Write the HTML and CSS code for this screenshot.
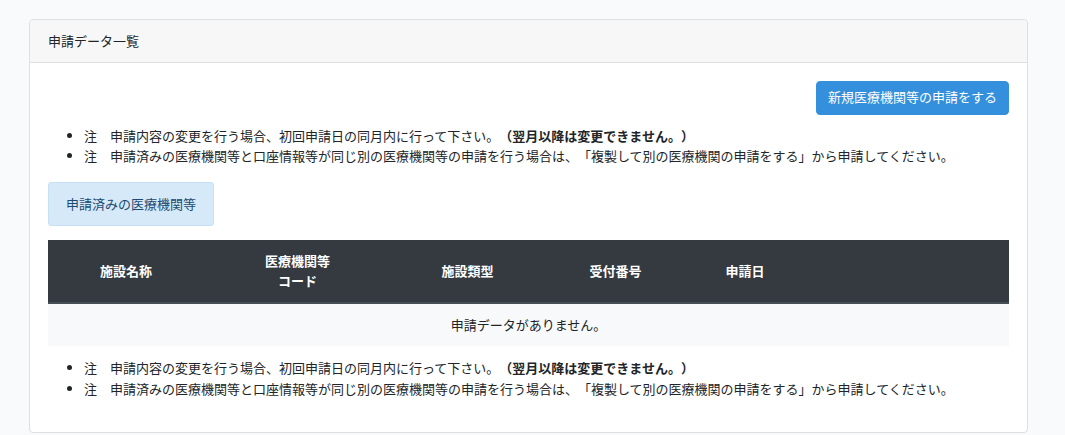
FILE: index.html
```html
<!DOCTYPE html>
<html lang="ja">
<head>
    <meta charset="UTF-8">
    <meta name="viewport" content="width=device-width, initial-scale=1.0">
    <title>申請データ一覧</title>
    <link rel="stylesheet" href="styles.css">
</head>
<body>
    <main class="page">
        <div class="card">
            <div class="card-header">申請データ一覧</div>
            <div class="card-body">
                <div class="actions">
                    <button class="btn-primary" type="button">新規医療機関等の申請をする</button>
                </div>

                <ul class="notes">
                    <li>注　申請内容の変更を行う場合、初回申請日の同月内に行って下さい。<strong>（翌月以降は変更できません。）</strong></li>
                    <li>注　申請済みの医療機関等と口座情報等が同じ別の医療機関等の申請を行う場合は、「複製して別の医療機関の申請をする」から申請してください。</li>
                </ul>

                <div class="section-label">申請済みの医療機関等</div>

                <table class="data-table">
                    <colgroup>
                        <col style="width: 156px">
                        <col style="width: 187px">
                        <col style="width: 153px">
                        <col style="width: 143px">
                        <col style="width: 116px">
                        <col>
                    </colgroup>
                    <thead>
                        <tr>
                            <th>施設名称</th>
                            <th>医療機関等<br>コード</th>
                            <th>施設類型</th>
                            <th>受付番号</th>
                            <th>申請日</th>
                            <th></th>
                        </tr>
                    </thead>
                    <tbody>
                        <tr>
                            <td colspan="6" class="empty">申請データがありません。</td>
                        </tr>
                    </tbody>
                </table>

                <ul class="notes">
                    <li>注　申請内容の変更を行う場合、初回申請日の同月内に行って下さい。<strong>（翌月以降は変更できません。）</strong></li>
                    <li>注　申請済みの医療機関等と口座情報等が同じ別の医療機関等の申請を行う場合は、「複製して別の医療機関の申請をする」から申請してください。</li>
                </ul>
            </div>
        </div>
    </main>
</body>
</html>
```

FILE: styles.css
```css
body {
    margin: 0;
    background: #f8fafc;
    color: #212529;
    font-family: "Noto Sans CJK JP", "Noto Sans", sans-serif;
    font-size: 13px;
    line-height: 1.6;
    text-spacing-trim: space-all;
}

.page {
    padding: 19px 37px 0 29px;
}

.card {
    background: #fff;
    border: 1px solid #dfdfdf;
    border-radius: 4px;
}

.card-header {
    background: #f7f7f7;
    border-bottom: 1px solid #dfdfdf;
    padding: 10.6px 18px;
    border-radius: 4px 4px 0 0;
}

.card-body {
    padding: 18px;
}

.actions {
    display: flex;
    justify-content: flex-end;
    margin-bottom: 11px;
}

.btn-primary {
    font-family: inherit;
    font-size: 13px;
    line-height: 1.6;
    color: #fff;
    background: #3490dc;
    border: 1px solid #3490dc;
    border-radius: 4px;
    padding: 5.4px 11px;
    cursor: pointer;
}

.notes {
    margin: 0 0 15px;
    padding-left: 36px;
}

.notes strong {
    font-weight: 700;
}

.section-label {
    display: inline-block;
    background: #d6e9f8;
    border: 1px solid #c6e0f5;
    color: #1b4b72;
    border-radius: 3px;
    padding: 10.7px 17px;
    margin: 0 0 14px;
}

.data-table {
    width: 100%;
    border-collapse: collapse;
    table-layout: fixed;
    margin-bottom: 12px;
}

.data-table th {
    background: #343a40;
    color: #fff;
    font-weight: 700;
    text-align: center;
    padding: 10.2px 8px;
    border-bottom: 2px solid #454d55;
    vertical-align: middle;
}

.data-table td {
    padding: 10.4px 8px;
}

.data-table .empty {
    background: #f8f9fa;
    text-align: center;
}
```
